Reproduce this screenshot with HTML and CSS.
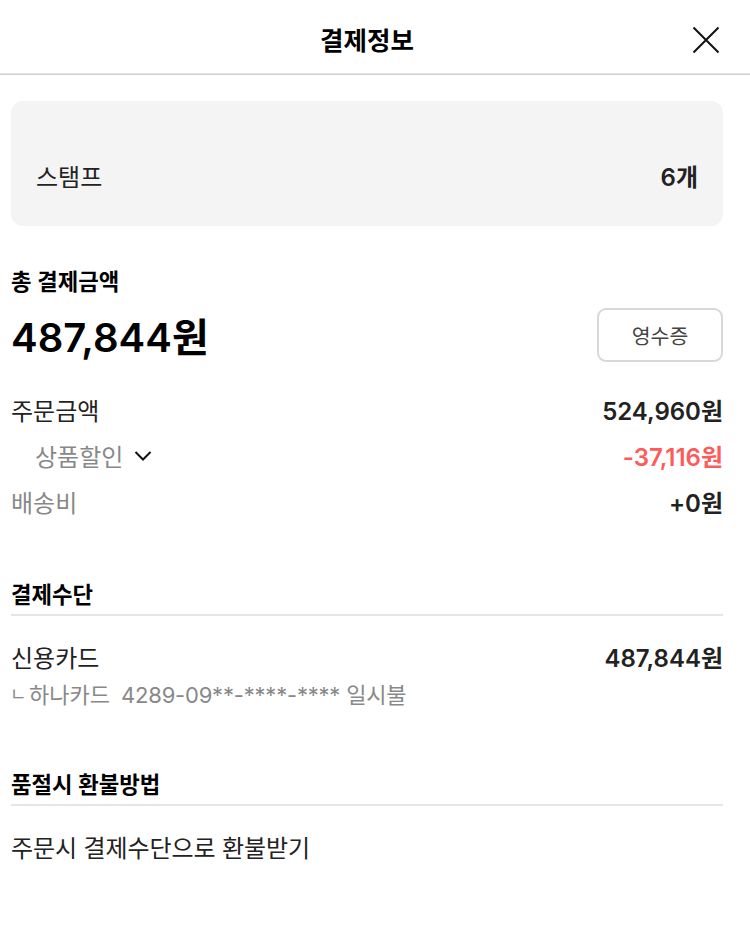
FILE: index.html
```html
<!doctype html>
<html lang="ko">
<head>
    <meta charset="utf-8">
    <title>결제정보</title>
    <link rel="stylesheet" href="styles.css">
</head>
<body>
    <header class="header">
        <h1>결제정보</h1>
        <button class="close" aria-label="닫기">
            <svg width="28" height="28" viewBox="0 0 28 28"><path d="M1.500 1.500l25 25M26.500 1.500l-25 25"/></svg>
        </button>
    </header>
    <main class="content">
        <div class="stamp">
            <span class="stamp-label">스탬프</span>
            <strong class="stamp-count">6개</strong>
        </div>

        <section class="total">
            <h2>총 결제금액</h2>
            <div class="total-row">
                <strong class="total-price">487,844원</strong>
                <button class="receipt">영수증</button>
            </div>
            <ul class="prices">
                <li><span class="label">주문금액</span><strong class="price">524,960원</strong></li>
                <li>
                    <span class="label sub">상품할인
                        <svg class="arrow" width="18" height="12" viewBox="0 0 18 12"><path d="M1.5 2L9 9.500 16.500 2"/></svg>
                    </span>
                    <strong class="price discount">-37,116원</strong>
                </li>
                <li><span class="label gray">배송비</span><strong class="price">+0원</strong></li>
            </ul>
        </section>

        <section class="method">
            <h2 class="line">결제수단</h2>
            <div class="method-row"><span class="label">신용카드</span><strong class="price">487,844원</strong></div>
            <p class="card"><span class="corner">ㄴ</span><span class="card-name">하나카드</span><span class="card-number">4289-09**-****-**** 일시불</span></p>
        </section>

        <section class="refund">
            <h2 class="line">품절시 환불방법</h2>
            <p class="refund-text">주문시 결제수단으로 환불받기</p>
        </section>
    </main>
</body>
</html>
```
FILE: styles.css
```css
* {
    box-sizing: border-box;
}

body {
    margin: 0;
    background: #fff;
    color: #222;
    font-family: Inter, "Noto Sans CJK KR", sans-serif;
    font-size: 24px;
    line-height: 36px;
}

h1, h2, p, ul {
    margin: 0;
    padding: 0;
}

button {
    font-family: inherit;
    background: none;
    padding: 0;
}

strong {
    font-weight: 600;
}

svg {
    display: block;
    fill: none;
    stroke: #111;
    stroke-width: 2;
}

.header {
    display: grid;
    grid-template-columns: 50px 1fr 50px;
    align-items: center;
    height: 75px;
    padding: 6px 19px 0 3px;
    border-bottom: 1px solid #cdcfd6;
    box-shadow: inset 0 -1px #e4e4e8;
}

.header h1 {
    grid-column: 2;
    padding-top: 1px;
    text-align: center;
    color: #000;
    font-size: 25.5px;
    font-weight: 600;
}

.close {
    display: flex;
    justify-content: center;
    border: 0;
}

.content {
    padding: 26px 27px 0 11px;
}

.stamp {
    display: flex;
    align-items: flex-end;
    justify-content: space-between;
    height: 125px;
    padding: 0 25px 30px;
    border-radius: 12px;
    background: #f4f4f4;
}

h2 {
    color: #000;
    font-size: 22.3px;
    font-weight: 600;
    line-height: 32px;
}

.total {
    padding-top: 40px;
}

.total-row {
    display: flex;
    align-items: center;
    justify-content: space-between;
    height: 54px;
    margin-top: 10px;
}

.total-price {
    padding-top: 5px;
    color: #000;
    font-size: 40px;
    line-height: 54px;
}

.receipt {
    width: 126px;
    height: 54px;
    border: 2px solid #d8d8d8;
    border-radius: 9px;
    color: #444;
    font-size: 20.5px;
}

.prices {
    padding-top: 27px;
    list-style: none;
}

.prices li,
.method-row {
    display: flex;
    align-items: center;
    justify-content: space-between;
    height: 46px;
}

.sub {
    display: flex;
    align-items: center;
    gap: 11px;
    padding-left: 24px;
    color: #888;
}

.arrow {
    margin-bottom: 5px;
}

.gray {
    color: #888;
}

.discount {
    color: #ff5a5a;
}

.method {
    padding-top: 52px;
}

.line {
    height: 37px;
    border-bottom: 2px solid #e5e5e5;
}

.method-row {
    height: 36px;
    margin-top: 25px;
}

.card {
    display: flex;
    align-items: center;
    color: #888;
    font-size: 22px;
}

.corner {
    width: 19px;
    margin-left: -1px;
    font-size: 18px;
}

.card-name {
    width: 92px;
}

.card-number {
    letter-spacing: -.2px;
}

.refund {
    padding-top: 56px;
}

.refund-text {
    margin-top: 25px;
    letter-spacing: -.1px;
}
```
